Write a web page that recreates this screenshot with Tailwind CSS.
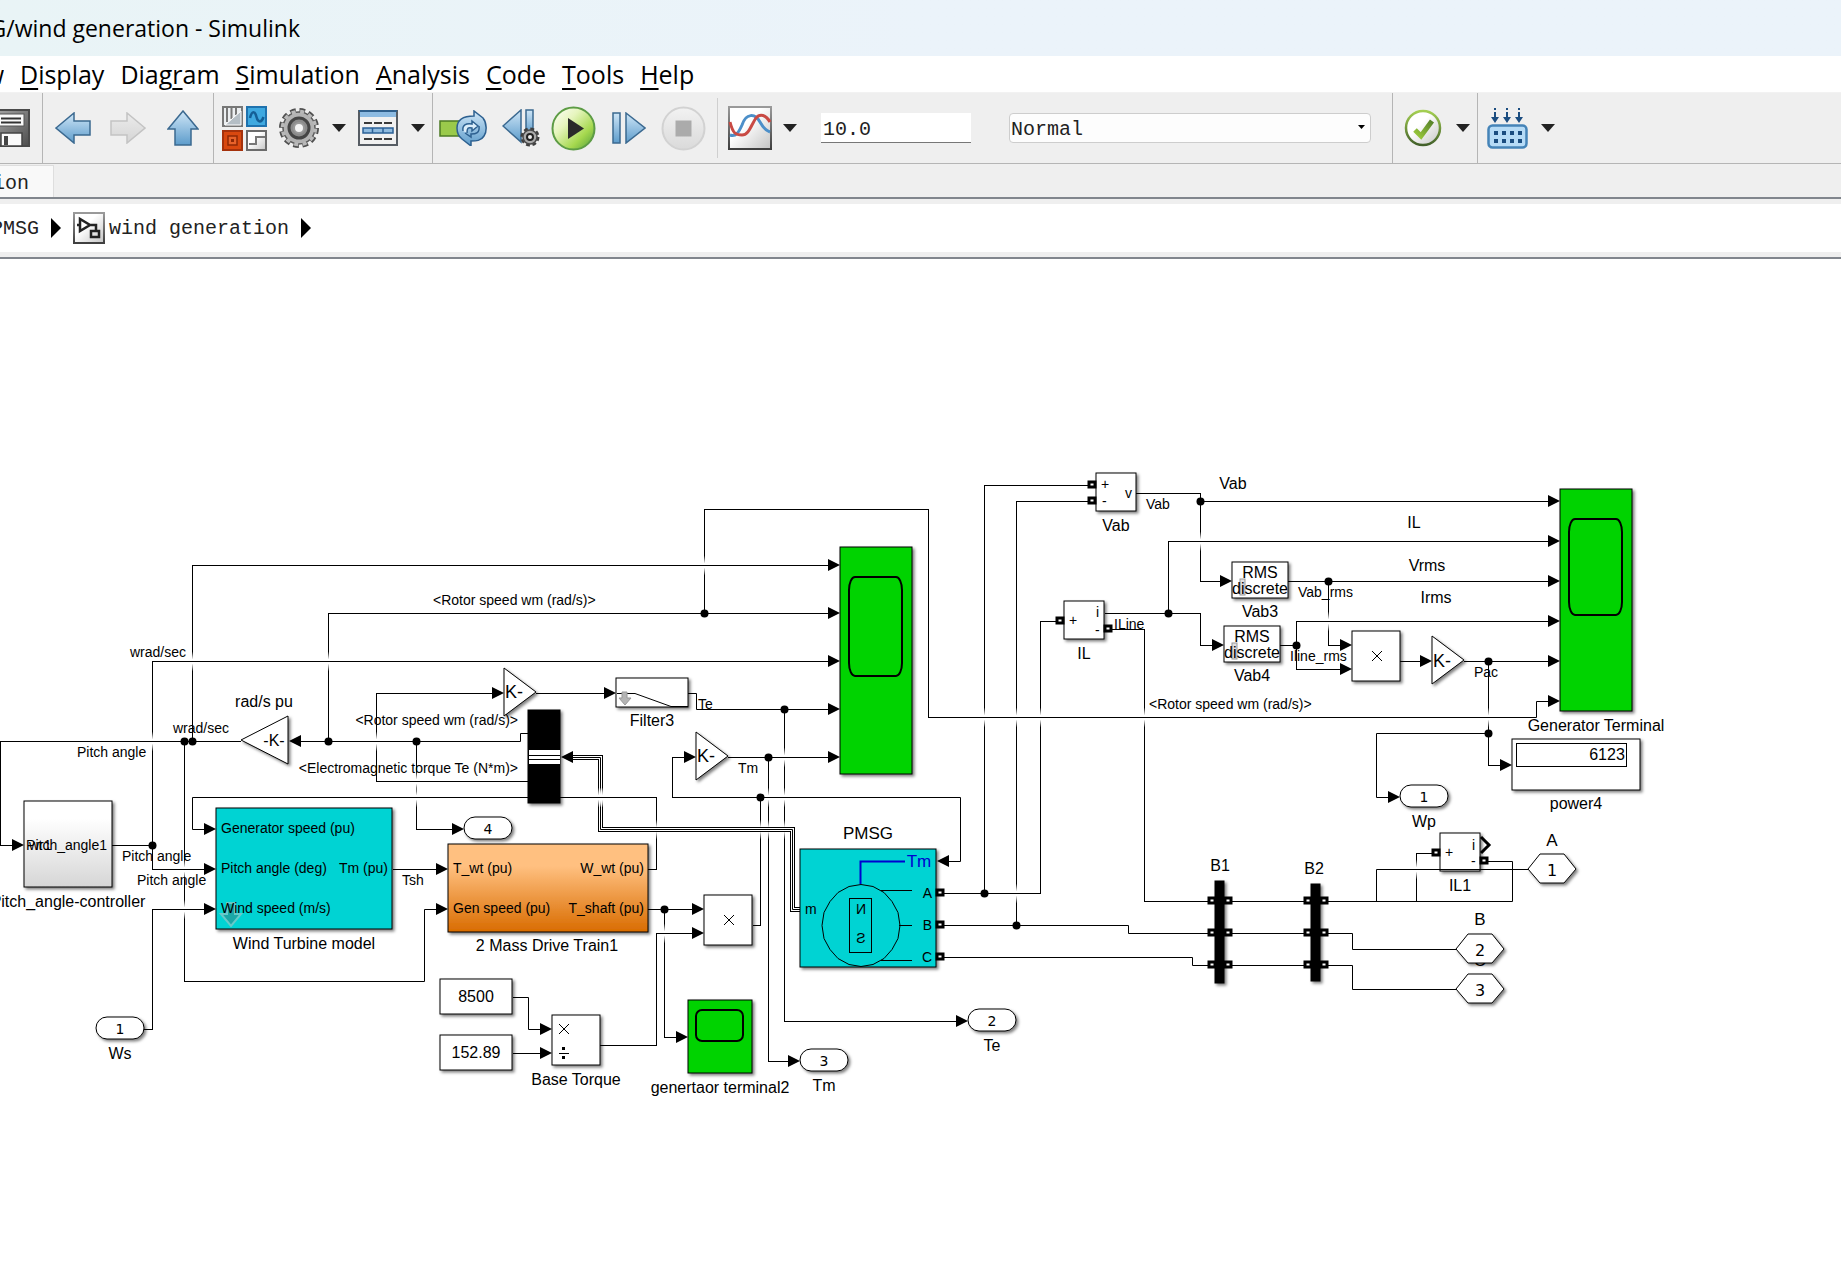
<!DOCTYPE html>
<html lang="en">
<head>
  <meta charset="UTF-8" />
  <meta name="viewport" content="width=device-width,initial-scale=1" />
  <title>PMSG/wind generation - Simulink</title>
  <script src="https://cdn.jsdelivr.net/npm/@tailwindcss/browser@4"></script>
</head>
<body class="bg-white text-black min-h-screen flex flex-col overflow-hidden">

  <!-- shared gradients -->
  <svg class="absolute w-0 h-0" aria-hidden="true">
    <defs>
      <linearGradient id="blue" x1="0" y1="0" x2="0" y2="1"><stop offset="0" stop-color="#cfe6f7"/><stop offset="1" stop-color="#5d9ccb"/></linearGradient>
      <linearGradient id="grey" x1="0" y1="0" x2="0" y2="1"><stop offset="0" stop-color="#ececec"/><stop offset="1" stop-color="#d4d4d4"/></linearGradient>
      <linearGradient id="metal" x1="0" y1="0" x2="1" y2="1"><stop offset="0" stop-color="#a8a8a8"/><stop offset="1" stop-color="#4e4e4e"/></linearGradient>
      <linearGradient id="paper" x1="0" y1="0" x2="1" y2="1"><stop offset="0.4" stop-color="#ffffff"/><stop offset="1" stop-color="#c4c4c4"/></linearGradient>
      <linearGradient id="frame" x1="0" y1="0" x2="0" y2="1"><stop offset="0" stop-color="#9a9a9a"/><stop offset="1" stop-color="#3f3f3f"/></linearGradient>
      <linearGradient id="green" x1="0" y1="0" x2="1" y2="1"><stop offset="0" stop-color="#ffffff"/><stop offset="0.35" stop-color="#e6f5bd"/><stop offset="0.7" stop-color="#a5d84e"/><stop offset="1" stop-color="#4b9a3a"/></linearGradient>
      <linearGradient id="greenring" x1="0" y1="0" x2="0" y2="1"><stop offset="0" stop-color="#a4cf52"/><stop offset="1" stop-color="#42602a"/></linearGradient>
      <linearGradient id="tick" x1="0" y1="1" x2="1" y2="0"><stop offset="0" stop-color="#9ccb3c"/><stop offset="1" stop-color="#56812a"/></linearGradient>
      <linearGradient id="disc" x1="0" y1="0" x2="0" y2="1"><stop offset="0" stop-color="#f2f2f2"/><stop offset="1" stop-color="#dadada"/></linearGradient>
    </defs>
  </svg>

  <header class="h-14 flex items-center bg-linear-to-r from-[#e9f4f6] via-[#ebf3fa] to-[#ebf3fa]">
    <h1 class="w-[300px] -mt-px flex justify-end overflow-hidden whitespace-nowrap font-['Open_Sans',sans-serif] text-[23px] leading-8">G/wind generation - Simulink</h1>
  </header>

  <nav class="h-9 flex items-center gap-4 bg-white font-['Open_Sans',sans-serif] text-[25px] leading-8 underline-offset-4">
    <a href="#" class="w-1 flex justify-end overflow-hidden">w</a>
    <a href="#"><u>D</u>isplay</a>
    <a href="#">Diag<u>r</u>am</a>
    <a href="#"><u>S</u>imulation</a>
    <a href="#"><u>A</u>nalysis</a>
    <a href="#"><u>C</u>ode</a>
    <a href="#"><u>T</u>ools</a>
    <a href="#"><u>H</u>elp</a>
  </nav>

  <div class="h-[72px] flex bg-[#efefef] border-b border-[#b5b5b5] border-t border-t-[#f2f2f2]">
    <div class="w-[43px] shrink-0 flex items-center justify-end pr-3 overflow-hidden border-r border-[#b5b5b5]">
      <button aria-label="Save" class="shrink-0">
        <svg class="w-[38px] h-[38px]" viewBox="0 0 38 38">
          <rect x="1" y="1" width="36" height="36" fill="url(#metal)" stroke="#4a4a4a" stroke-width="2"/>
          <rect x="6" y="5" width="26" height="12" fill="#fafafa" stroke="#555"/>
          <path d="M9 9.500h20M9 13.500h20" stroke="#333" stroke-width="2"/>
          <path d="M9 37V24h21v13z" fill="#fafafa" stroke="#444" stroke-width="1.500"/>
          <rect x="12" y="27" width="4" height="9" fill="#444"/>
        </svg>
      </button>
    </div>

    <div class="w-[171px] shrink-0 flex items-center pl-[2px] border-r border-[#b5b5b5]">
      <button aria-label="Back" class="w-[55px] flex justify-center">
        <svg class="w-9 h-8" viewBox="0 0 36 32"><path d="M1 16L19 1v8h16v14H19v8z" fill="url(#blue)" stroke="#3b6990" stroke-width="1.500"/></svg>
      </button>
      <button aria-label="Forward" class="w-[55px] flex justify-center">
        <svg class="w-9 h-8" viewBox="0 0 36 32"><path d="M35 16L17 1v8H1v14h16v8z" fill="url(#grey)" stroke="#c3c3c3" stroke-width="1.500"/></svg>
      </button>
      <button aria-label="Up to parent" class="w-[55px] flex justify-center">
        <svg class="w-8 h-9" viewBox="0 0 32 36"><path d="M16 1L31 19h-7v16H8V19H1z" fill="url(#blue)" stroke="#3b6990" stroke-width="1.500"/></svg>
      </button>
    </div>

    <div class="w-[219px] shrink-0 flex items-center pl-[6px] border-r border-[#b5b5b5]">
      <button aria-label="Library browser" class="w-12 flex justify-center">
        <svg class="w-[45px] h-[45px]" viewBox="0 0 45 45">
          <rect x="1" y="1" width="19" height="19" fill="#eceff1" stroke="#777" stroke-width="2"/>
          <path d="M5 2v14M9.500 2v11M14 2v7" stroke="#777" stroke-width="2"/><path d="M3 19L19 5v14z" fill="#b5bec5" stroke="#fff"/>
          <rect x="25" y="1" width="19" height="19" fill="#3fa9e0" stroke="#1f72ae" stroke-width="2"/>
          <path d="M28 12c2-8 5-7 6.500-1s5 6 7 0" fill="none" stroke="#145f96" stroke-width="2.500"/>
          <rect x="1" y="25" width="19" height="19" fill="#d9480f" stroke="#a5320c" stroke-width="2"/>
          <rect x="6" y="30" width="9" height="9" fill="#e8622a" stroke="#8e2806" stroke-width="1.500"/><rect x="9" y="33" width="3" height="3" fill="#8e2806"/>
          <rect x="25" y="25" width="19" height="19" fill="url(#paper)" stroke="#6b6b6b" stroke-width="2"/>
          <path d="M27 38h7v-7h9" fill="none" stroke="#777" stroke-width="2"/>
        </svg>
      </button>
      <button aria-label="Model configuration" class="w-[62px] flex justify-center">
        <svg class="w-[42px] h-[42px]" viewBox="-21 -21 42 42">
          <circle r="17.500" fill="none" stroke="#505050" stroke-width="5" stroke-dasharray="5.500 3.660"/>
          <circle r="16" fill="#b3b3b3" stroke="#5a5a5a" stroke-width="1.500"/>
          <circle r="16.500" fill="none" stroke="#b9b9b9" stroke-width="3.500" stroke-dasharray="4 4.640" stroke-dashoffset="-.700"/>
          <circle r="10" fill="#8b8b8b" stroke="#454545" stroke-width="3"/>
          <circle r="5" fill="#f4f4f4" stroke="#9a9a9a" stroke-width="2"/>
        </svg>
      </button>
      <button aria-label="Configuration menu" class="w-[18px] flex justify-center"><svg class="w-[14px] h-2" viewBox="0 0 14 8"><path d="M0 0h14L7 8z" fill="#222"/></svg></button>
      <button aria-label="Model explorer" class="w-[60px] flex justify-center">
        <svg class="w-10 h-9" viewBox="0 0 40 36">
          <rect x="1" y="1" width="38" height="34" fill="#f1f1f1" stroke="#565c63" stroke-width="2"/>
          <rect x="2" y="2" width="36" height="5" fill="#8dbbe2"/><path d="M1 1h38" stroke="#2f5f8c" stroke-width="2"/>
          <path d="M6 13h28M6 29h28" stroke="#3a3a3a" stroke-width="2" stroke-dasharray="8 2"/>
          <rect x="5" y="18" width="30" height="5" fill="#8fbbe0" stroke="#2b6096" stroke-width="1.500"/>
          <path d="M14.500 18v5M25 18v5" stroke="#2b6096" stroke-width="1.500"/>
        </svg>
      </button>
      <button aria-label="Explorer menu" class="w-5 flex justify-center"><svg class="w-[14px] h-2" viewBox="0 0 14 8"><path d="M0 0h14L7 8z" fill="#222"/></svg></button>
    </div>

    <div class="w-[284px] shrink-0 flex items-center pl-[6px]">
      <button aria-label="Update diagram" class="w-12 mr-[10px]">
        <svg class="w-12 h-9" viewBox="0 0 48 36">
          <rect x="1" y="11" width="22" height="15" fill="#9aca4b" stroke="#4c7b24" stroke-width="1.500"/>
          <path d="M18 18c0-9 7-12 17-12V1l9 7c4 5 4 14 1 18-3 5-8 5-13 5v5l-9-7c-4-3-5-7-5-11z" fill="url(#blue)" stroke="#2d6090" stroke-width="1.500"/>
          <path d="M24 21c-1-6 3-8 9-7v-3l6 5-6 5v-3c-4-1-5 0-5 5" fill="#dceefa" stroke="#2d6090" stroke-width="1.500"/>
          <path d="M40 16c1 7-3 8-8 8v3l-6-4" fill="none" stroke="#2d6090" stroke-width="1.500"/>
        </svg>
      </button>
      <button aria-label="Step back" class="w-12 flex justify-center">
        <svg class="w-[38px] h-[38px]" viewBox="0 0 38 38">
          <path d="M1 17L19 1v32z" fill="url(#blue)" stroke="#3b6990" stroke-width="1.500"/>
          <rect x="24" y="1" width="7" height="24" fill="url(#blue)" stroke="#3b6990" stroke-width="1.500"/>
          <circle cx="28" cy="28" r="7.500" fill="#aaa" stroke="#3e3e3e" stroke-width="4" stroke-dasharray="3.500 2.400"/>
          <circle cx="28" cy="28" r="7" fill="#aaa" stroke="#4b4b4b" stroke-width="1.500"/>
          <circle cx="28" cy="28" r="3" fill="#eee" stroke="#222" stroke-width="2"/>
        </svg>
      </button>
      <button aria-label="Run" class="w-14 flex justify-center">
        <svg class="w-[45px] h-[45px]" viewBox="0 0 45 45">
          <circle cx="22.500" cy="22.500" r="21" fill="url(#green)" stroke="#5d9c45" stroke-width="2"/>
          <path d="M17 12l16 10.500L17 33z" fill="#2a2a2a"/>
        </svg>
      </button>
      <button aria-label="Step forward" class="w-14 flex justify-center">
        <svg class="w-[34px] h-8" viewBox="0 0 34 32">
          <rect x="1" y="1" width="7" height="30" fill="url(#blue)" stroke="#3b6990" stroke-width="1.500"/>
          <path d="M14 1l19 15-19 15z" fill="url(#blue)" stroke="#3b6990" stroke-width="1.500"/>
        </svg>
      </button>
      <button aria-label="Stop" class="w-[52px] flex justify-center">
        <svg class="w-[45px] h-[45px]" viewBox="0 0 45 45">
          <circle cx="22.500" cy="22.500" r="21" fill="url(#disc)" stroke="#d2d2d2" stroke-width="2"/>
          <rect x="14.500" y="14.500" width="16" height="16" fill="#ababab"/>
        </svg>
      </button>
    </div>

    <div class="w-[675px] shrink-0 flex items-center">
      <div class="w-px h-[60px] bg-[#cfcfcf]"></div>
      <button aria-label="Simulation data inspector" class="ml-[10px]">
        <svg class="w-11 h-11" viewBox="0 0 44 44">
          <rect x="1" y="1" width="42" height="42" fill="url(#paper)" stroke="url(#frame)" stroke-width="2"/>
          <path d="M2 29c6 2 9-3 12-10 4-12 13-12 18-3 4 7 7 9 10 10" fill="none" stroke="#4c8fc9" stroke-width="3"/>
          <path d="M2 16c3 12 6 13 12 13 7 0 9-10 14-17 4-5 10-3 14 4" fill="none" stroke="#c94a44" stroke-width="3"/>
        </svg>
      </button>
      <button aria-label="Inspector menu" class="ml-[11px] w-[14px]"><svg class="w-[14px] h-2" viewBox="0 0 14 8"><path d="M0 0h14L7 8z" fill="#222"/></svg></button>
      <input aria-label="Simulation stop time" value="10.0" class="ml-6 w-[150px] h-[30px] bg-white border-b border-[#777] pt-1 px-[2px] font-['Liberation_Mono',monospace] text-[20px] leading-6 text-[#222]" />
      <div class="ml-[38px] relative">
        <select aria-label="Simulation mode" class="appearance-none w-[362px] h-[30px] bg-[#fdfdfd] border border-[#cdcdcd] rounded pt-[3px] px-px font-['Liberation_Mono',monospace] text-[20px] leading-6 text-[#222]">
          <option>Normal</option>
        </select>
        <svg class="absolute right-[6px] top-3 w-[7px] h-1 pointer-events-none" viewBox="0 0 7 4"><path d="M0 0h7L3.500 4z"/></svg>
      </div>
    </div>

    <div class="w-[85px] shrink-0 flex items-center border-l border-[#b5b5b5] pl-[11px]">
      <button aria-label="Model advisor">
        <svg class="w-[38px] h-[38px]" viewBox="0 0 38 38">
          <circle cx="19" cy="19" r="17" fill="url(#paper)" stroke="url(#greenring)" stroke-width="2.500"/>
          <path d="M11 21l6 6L28 12" fill="none" stroke="url(#tick)" stroke-width="5"/>
        </svg>
      </button>
      <button aria-label="Advisor menu" class="ml-[14px]"><svg class="w-[14px] h-2" viewBox="0 0 14 8"><path d="M0 0h14L7 8z" fill="#222"/></svg></button>
    </div>
    <div class="flex-1 flex items-center border-l border-[#b5b5b5] pl-[9px]">
      <button aria-label="Build model">
        <svg class="w-[41px] h-[41px]" viewBox="0 0 41 41">
          <rect x="1.500" y="17.500" width="38" height="22" rx="4" fill="#b6dbf6" stroke="#4584b8" stroke-width="2.500"/>
          <path d="M7 25h28M7 33h28" stroke="#1b4d80" stroke-width="4" stroke-dasharray="4 4"/>
          <path d="M8 0v2M8 4v6M20 0v2M20 4v6M32 0v2M32 4v6" stroke="#1b4d80" stroke-width="2"/>
          <path d="M4 9h8l-4 6zM16 9h8l-4 6zM28 9h8l-4 6z" fill="#1b4d80"/>
        </svg>
      </button>
      <button aria-label="Build menu" class="ml-[13px]"><svg class="w-[14px] h-2" viewBox="0 0 14 8"><path d="M0 0h14L7 8z" fill="#222"/></svg></button>
    </div>
  </div>

  <div class="h-[35px] flex items-end bg-[#efefef] border-b-2 border-[#81868d]">
    <button class="w-[54px] h-8 pt-1 pr-6 flex items-center justify-end overflow-hidden bg-[#f9f9f9] border-t border-r border-[#dedede] font-['Liberation_Mono',monospace] text-[20px] leading-6 text-[#222]"><span>ion</span></button>
  </div>

  <div class="h-[58px] flex items-center bg-white border-y-[5px] border-[#efefef] font-['Liberation_Mono',monospace] text-[20px] leading-6 text-[#222]">
    <a href="#" class="w-[39px] pt-[2px] flex justify-end overflow-hidden">PMSG</a>
    <svg class="ml-3 w-[10px] h-5" viewBox="0 0 10 20"><path d="M0 0l10 10L0 20z"/></svg>
    <svg class="ml-3 w-8 h-8" viewBox="0 0 32 32">
      <rect x="1" y="1" width="30" height="30" fill="url(#paper)" stroke="url(#frame)" stroke-width="2"/>
      <path d="M7 7v12l10-6zM4 13h3M17 13h6v6" fill="none" stroke="#222" stroke-width="2.500"/>
      <rect x="18" y="19" width="8" height="6" fill="none" stroke="#222" stroke-width="2.500"/>
    </svg>
    <a href="#" class="ml-1 pt-[2px]">wind generation</a>
    <svg class="ml-3 w-[10px] h-5" viewBox="0 0 10 20"><path d="M0 0l10 10L0 20z"/></svg>
  </div>

  <main class="flex-1 border-t-2 border-[#81868d] overflow-hidden">
    <!-- model canvas -->
    <svg class="block w-[1841px] h-[1026px] font-['Liberation_Sans',sans-serif]" viewBox="0 259 1841 1026">
      <defs>
        <filter id="shadow" x="-20%" y="-20%" width="150%" height="150%"><feDropShadow dx="2" dy="2" stdDeviation="1.500" flood-color="#000" flood-opacity="0.5"/></filter>
        <linearGradient id="fade" x1="0" y1="0" x2="0" y2="1"><stop offset="0" stop-color="#fff" stop-opacity="0"/><stop offset="0.4" stop-color="#fff"/><stop offset="0.6" stop-color="#fff"/><stop offset="1" stop-color="#fff" stop-opacity="0"/></linearGradient>
        <linearGradient id="orange" x1="0" y1="0" x2="0" y2="1"><stop offset="0.250" stop-color="#ffc080"/><stop offset="1" stop-color="#d96c00"/></linearGradient>
        <linearGradient id="silver" x1="0" y1="0" x2="0" y2="1"><stop offset="0.2" stop-color="#fff"/><stop offset="1" stop-color="#d6d6d6"/></linearGradient>
        <rect id="gap" x="-4" y="-10" width="8" height="20" fill="url(#fade)"/>
        <path id="right" d="M0 0l-12-6v12z"/>
        <path id="left" d="M0 0l12-6v12z"/>
        <circle id="dot" r="4"/>
        <rect id="port" x="1" y="1" width="6" height="5" fill="#fff" stroke="#000" stroke-width="3"/>
        <path id="times" d="M-5-5L5 5M5-5L-5 5" fill="none" stroke="#000"/>
        <path id="down" d="M-4-12h8v11h6L0 11-10-1h6z"/>
      </defs>

      <!-- vertical runs -->
      <g fill="none" stroke="#000">
        <path d="M704.500 613V509M928.500 509v209M192.500 741V565M328.500 741V613M152.500 869V661M184.500 741v241M0.500 741v105M152.500 1030V909"/>
        <path d="M376.500 782V693M416.500 741v89M656.500 797v73M656.500 1046V933M664.500 909v129M760.500 797v129M768.500 757v305M784.500 709v313M672.500 757v41"/>
        <path d="M984.500 894V485M1016.500 926V501M1040.500 894V621M1144.500 629v273M1200.500 493v89M1168.500 614V541M1200.500 613v33M1328.500 581v65M1296.500 621v49M1488.500 661v105M1416.500 902v-49"/>
      </g>
      <g>
        <use href="#gap" x="704.500" y="565.500"/><use href="#gap" x="328.500" y="661.500"/><use href="#gap" x="192.500" y="661.500"/>
        <use href="#gap" x="152.500" y="741.500"/><use href="#gap" x="184.500" y="869.500"/><use href="#gap" x="184.500" y="909.500"/>
        <use href="#gap" x="376.500" y="741.500"/><use href="#gap" x="416.500" y="781.500"/><use href="#gap" x="416.500" y="797.500"/>
        <use href="#gap" x="656.500" y="829.500"/><use href="#gap" x="664.500" y="933.500"/><use href="#gap" x="760.500" y="829.500"/>
        <use href="#gap" x="768.500" y="797.500"/><use href="#gap" x="768.500" y="829.500"/><use href="#gap" x="784.500" y="757.500"/><use href="#gap" x="784.500" y="797.500"/><use href="#gap" x="784.500" y="829.500"/>
        <use href="#gap" x="984.500" y="717.500"/><use href="#gap" x="1016.500" y="717.500"/><use href="#gap" x="1016.500" y="893.500"/><use href="#gap" x="1040.500" y="717.500"/><use href="#gap" x="1144.500" y="717.500"/>
        <use href="#gap" x="1200.500" y="541.500"/><use href="#gap" x="1328.500" y="621.500"/><use href="#gap" x="1488.500" y="717.500"/><use href="#gap" x="1416.500" y="869.500"/>
      </g>

      <!-- bus from PMSG to selector -->
      <g fill="none">
        <path d="M570 757.500h30.500v72h192v80h9" stroke="#000" stroke-width="5"/>
        <path d="M570 757.500h30.500v72h192v80h9" stroke="#fff" stroke-width="3"/>
        <path d="M570 757.500h30.500v72h192v80h9" stroke="#000"/>
        <use href="#gap" x="598.500" y="797.500"/><use href="#gap" x="603.500" y="797.500"/>
      </g>

      <!-- horizontal runs -->
      <g fill="none" stroke="#000">
        <path d="M704 509.500h225M928 717.500h608.500v-16H1550M192 565.500h640M328 613.500h504M152 661.500h680M688 693.500h8.500v16H832M728 757.500h104M672 757.500h14M672 797.500h288.500v64H948"/>
        <path d="M0 741.500h241M300 741.500h220.500v-8h8M0 845.500h14M112 845.500h41M152 869.500h54M144 1029.500h9M152 909.500h54M184 981.500h240.500v-72H440M393 869.500h45M376 693.500h120M536 693.500h72M376 781.500h152M204 829.500h-11.500v-32H657M416 829.500h40"/>
        <path d="M648 869.500h9M648 909.500h48M600 1045.500h57M656 933.500h40M664 1037.500h16M753 925.500h8M768 1061.500h24M784 1021.500h176M513 997.500h15.500v32H544M513 1053.500h31"/>
        <path d="M984 485.500h105M1016 501.500h73M1040 621.500h17M1136 493.500h65M1200 501.500h352M1200 581.500h24M1168 541.500h384M1105 613.500h96M1200 645.500h16M1112 629.500h33"/>
        <path d="M1288 581.500h264M1328 645.500h16M1280 645.500h17M1296 621.500h256M1296 669.500h48M1400 661.500h24M1464 661.500h88M1488 765.500h16M1489 733.500h-112.500v64H1392"/>
        <path d="M944 893.500h97M944 925.500h184.500v8H1208M944 957.500h248.500v8H1208M1144 901.500h64M1232 901.500h72M1232 933.500h72M1232 965.500h72M1328 901.500h184.500v-40H1488M1416 853.500h16M1328 933.500h24.500v16H1457M1328 965.500h24.500v24H1457"/>
      </g>

      <g>
        <use href="#dot" x="704.500" y="613.500"/><use href="#dot" x="784.500" y="709.500"/><use href="#dot" x="768.500" y="757.500"/><use href="#dot" x="760.500" y="797.500"/>
        <use href="#dot" x="184.500" y="741.500"/><use href="#dot" x="192.500" y="741.500"/><use href="#dot" x="328.500" y="741.500"/><use href="#dot" x="416.500" y="741.500"/><use href="#dot" x="152.500" y="845.500"/><use href="#dot" x="664.500" y="909.500"/>
        <use href="#dot" x="984.500" y="893.500"/><use href="#dot" x="1016.500" y="925.500"/><use href="#dot" x="1200.500" y="501.500"/><use href="#dot" x="1168.500" y="613.500"/><use href="#dot" x="1328.500" y="581.500"/><use href="#dot" x="1296.500" y="645.500"/><use href="#dot" x="1488.500" y="661.500"/><use href="#dot" x="1488.500" y="733.500"/>
      </g>

      <!-- blocks -->
      <g filter="url(#shadow)" fill="#fff" stroke="#000">
        <rect x="840" y="547" width="72" height="227" fill="#00d300"/>
        <rect x="1560" y="489" width="72" height="222" fill="#00d300"/>
        <rect x="688" y="1000" width="64" height="73" fill="#00d300"/>
        <rect x="216" y="808" width="176" height="121" fill="#00d3d3"/>
        <rect x="800" y="849" width="136" height="118" fill="#00d3d3"/>
        <rect x="448" y="844" width="200" height="88" fill="url(#orange)"/>
        <rect x="24" y="801" width="88" height="86" fill="url(#silver)"/>
        <rect x="616" y="678" width="72" height="29"/>
        <rect x="704" y="895" width="48" height="50"/>
        <rect x="552" y="1015" width="48" height="50"/>
        <rect x="440" y="979" width="72" height="35"/>
        <rect x="440" y="1035" width="72" height="35"/>
        <rect x="1096" y="473" width="40" height="38"/>
        <rect x="1064" y="601" width="40" height="38"/>
        <rect x="1440" y="833" width="40" height="38"/>
        <rect x="1232" y="562" width="56" height="36"/>
        <rect x="1224" y="626" width="56" height="36"/>
        <rect x="1352" y="631" width="48" height="50"/>
        <rect x="1512" y="739" width="128" height="51"/>
        <rect x="528" y="710" width="32" height="93" fill="#000"/>
        <rect x="1215" y="881" width="9" height="102" fill="#000"/>
        <rect x="1311" y="884" width="9" height="97" fill="#000"/>
        <path d="M504 668v48l32-24zM696 732v48l32-24zM1432 636v48l32-24zM288 716v48l-47-24z"/>
        <rect x="464" y="817" width="48" height="22" rx="11"/>
        <rect x="96" y="1017" width="48" height="22" rx="11"/>
        <rect x="800" y="1049" width="48" height="22" rx="11"/>
        <rect x="968" y="1009" width="48" height="22" rx="11"/>
        <rect x="1400" y="785" width="48" height="22" rx="11"/>
      </g>
      <text x="1480" y="966" text-anchor="middle" class="text-[17px]">C</text>
      <path filter="url(#shadow)" fill="#fff" stroke="#000" d="M1528 869l12-15h24l12 15-12 14h-24zM1456 949l12-15h24l12 15-12 14h-24zM1456 989l12-15h24l12 15-12 14h-24z"/>
      <path d="M1376.500 902v-32.500H1528" fill="none" stroke="#000"/>

      <!-- block faces -->
      <g fill="none" stroke="#000">
        <rect x="849" y="577" width="53" height="99" rx="6" ry="13" stroke-width="2"/>
        <rect x="1569" y="519" width="53" height="96" rx="6" ry="13" stroke-width="2"/>
        <rect x="696" y="1010" width="47" height="31" rx="6" stroke-width="2"/>
        <rect x="529" y="750" width="31" height="14" fill="#fff" stroke="none"/>
        <path d="M529 755.500h31M529 759.500h31"/>
        <path d="M617 693.500h18l36 13h17"/>
        <rect x="1516.500" y="743.500" width="110" height="23"/>
        <path d="M861 966.500l-12-2-11-6-8-9-6-11-2-13 2-13 6-11 8-9 11-6 12-2 12 2 11 6 8 9 6 11 2 13-2 13-6 11-8 9-11 6z"/>
        <rect x="849.500" y="898.500" width="22" height="54"/>
        <path d="M881 890.500h31M899 925.500h13M881 960.500h31"/>
        <path d="M905 861.500h-44.500V884" stroke="#0000d0" stroke-width="2"/>
        <path d="M1481 837l8 8-8 8" stroke-width="3"/>
        <use href="#times" x="729" y="920"/><use href="#times" x="1377" y="656"/><use href="#times" x="564" y="1029"/>
        <path d="M559 1053.500h10"/><path d="M562 1048.500h3M562 1057.500h3" stroke-width="3"/>
      </g>
      <g>
        <use href="#right" x="840" y="565"/><use href="#right" x="840" y="613"/><use href="#right" x="840" y="661"/><use href="#right" x="840" y="709"/><use href="#right" x="840" y="757"/>
        <use href="#right" x="616" y="693"/><use href="#right" x="696" y="757"/><use href="#right" x="504" y="693"/><use href="#right" x="216" y="829"/><use href="#right" x="216" y="869"/><use href="#right" x="216" y="909"/><use href="#right" x="24" y="845"/>
        <use href="#right" x="448" y="869"/><use href="#right" x="448" y="909"/><use href="#right" x="464" y="829"/><use href="#right" x="704" y="909"/><use href="#right" x="704" y="933"/><use href="#right" x="688" y="1037"/><use href="#right" x="800" y="1061"/><use href="#right" x="968" y="1021"/><use href="#right" x="552" y="1029"/><use href="#right" x="552" y="1053"/>
        <use href="#right" x="1560" y="501"/><use href="#right" x="1560" y="541"/><use href="#right" x="1560" y="581"/><use href="#right" x="1560" y="621"/><use href="#right" x="1560" y="661"/><use href="#right" x="1560" y="701"/>
        <use href="#right" x="1232" y="581"/><use href="#right" x="1224" y="645"/><use href="#right" x="1352" y="645"/><use href="#right" x="1352" y="669"/><use href="#right" x="1432" y="661"/><use href="#right" x="1512" y="765"/><use href="#right" x="1400" y="797"/>
        <use href="#left" x="289" y="741"/><use href="#left" x="561" y="757"/><use href="#left" x="937" y="861"/>
      </g>
      <g>
        <use href="#port" x="1088" y="481"/><use href="#port" x="1088" y="497"/><use href="#port" x="1056" y="617"/><use href="#port" x="1104" y="625"/><use href="#port" x="1432" y="849"/><use href="#port" x="1480" y="857"/>
        <use href="#port" x="936" y="889"/><use href="#port" x="936" y="921"/><use href="#port" x="936" y="953"/>
        <use href="#port" x="1208" y="897"/><use href="#port" x="1208" y="929"/><use href="#port" x="1208" y="961"/><use href="#port" x="1224" y="897"/><use href="#port" x="1224" y="929"/><use href="#port" x="1224" y="961"/>
        <use href="#port" x="1304" y="897"/><use href="#port" x="1304" y="929"/><use href="#port" x="1304" y="961"/><use href="#port" x="1320" y="897"/><use href="#port" x="1320" y="929"/><use href="#port" x="1320" y="961"/>
      </g>

      <!-- mask badges -->
      <use href="#down" x="231" y="915" fill="#229c9c" fill-opacity="0.8" stroke="#66c9c9" stroke-width="2"/>
      <path d="M622 692h5v6h4l-6 7-6-7h3z" fill="#b5b5b5" stroke="#999"/>
      <rect x="1240" y="579" width="5" height="16" fill="#ccc" fill-opacity="0.6" stroke="#999"/>
      <rect x="1232" y="643" width="5" height="16" fill="#ccc" fill-opacity="0.6" stroke="#999"/>

      <!-- signal and port labels -->
      <g class="text-[14px]">
        <text x="433" y="605">&lt;Rotor speed wm (rad/s)&gt;</text>
        <text x="518" y="725" text-anchor="end">&lt;Rotor speed wm (rad/s)&gt;</text>
        <text x="518" y="773" text-anchor="end">&lt;Electromagnetic torque Te (N*m)&gt;</text>
        <text x="1149" y="709">&lt;Rotor speed wm (rad/s)&gt;</text>
        <text x="130" y="657">wrad/sec</text>
        <text x="173" y="733">wrad/sec</text>
        <text x="77" y="757">Pitch angle</text>
        <text x="122" y="861">Pitch angle</text>
        <text x="137" y="885">Pitch angle</text>
        <text x="402" y="885">Tsh</text>
        <text x="698" y="709">Te</text>
        <text x="738" y="773">Tm</text>
        <text x="1146" y="509">Vab</text>
        <text x="1114" y="629">ILine</text>
        <text x="1298" y="597">Vab_rms</text>
        <text x="1290" y="661">Iline_rms</text>
        <text x="1474" y="677">Pac</text>
        <text x="29" y="850">wr1</text>
        <text x="107" y="850" text-anchor="end">Pitch_angle1</text>
        <text x="221" y="833">Generator speed (pu)</text>
        <text x="221" y="873">Pitch angle (deg)</text>
        <text x="221" y="913">Wind speed (m/s)</text>
        <text x="388" y="873" text-anchor="end">Tm (pu)</text>
        <text x="453" y="873">T_wt (pu)</text>
        <text x="453" y="913">Gen speed (pu)</text>
        <text x="644" y="873" text-anchor="end">W_wt (pu)</text>
        <text x="644" y="913" text-anchor="end">T_shaft (pu)</text>
        <text x="805" y="914">m</text>
        <text x="932" y="898" text-anchor="end">A</text>
        <text x="932" y="930" text-anchor="end">B</text>
        <text x="932" y="962" text-anchor="end">C</text>
        <text x="861" y="914" text-anchor="middle">И</text>
        <text x="861" y="943" text-anchor="middle">Ƨ</text>
        <text x="1101" y="489">+</text><text x="1102" y="506">-</text><text x="1125" y="498">v</text>
        <text x="1069" y="625">+</text><text x="1096" y="617">i</text><text x="1095" y="635">-</text>
        <text x="1445" y="857">+</text><text x="1472" y="850">i</text><text x="1471" y="866">-</text>
      </g>

      <!-- block names and values -->
      <g class="text-[16px]" text-anchor="middle">
        <text x="264" y="707">rad/s pu</text>
        <text x="274" y="746">-K-</text>
        <text x="68" y="907">Pitch_angle-controller</text>
        <text x="304" y="949">Wind Turbine model</text>
        <text x="547" y="951">2 Mass Drive Train1</text>
        <text x="476" y="1002">8500</text>
        <text x="476" y="1058">152.89</text>
        <text x="576" y="1085">Base Torque</text>
        <text x="720" y="1093">genertaor terminal2</text>
        <text x="652" y="726">Filter3</text>
        <text x="120" y="1059">Ws</text>
        <text x="824" y="1091">Tm</text>
        <text x="992" y="1051">Te</text>
        <text x="1116" y="531">Vab</text>
        <text x="1233" y="489">Vab</text>
        <text x="1414" y="528">IL</text>
        <text x="1427" y="571">Vrms</text>
        <text x="1436" y="603">Irms</text>
        <text x="1084" y="659">IL</text>
        <text x="1260" y="578">RMS</text>
        <text x="1260" y="594">discrete</text>
        <text x="1260" y="617">Vab3</text>
        <text x="1252" y="642">RMS</text>
        <text x="1252" y="658">discrete</text>
        <text x="1252" y="681">Vab4</text>
        <text x="1596" y="731">Generator Terminal</text>
        <text x="1607" y="760">6123</text>
        <text x="1576" y="809">power4</text>
        <text x="1424" y="827">Wp</text>
        <text x="1460" y="891">IL1</text>
        <text x="1220" y="871">B1</text>
        <text x="1314" y="874">B2</text>
      </g>
      <g class="text-[17px]" text-anchor="middle">
        <text x="868" y="839">PMSG</text>
        <text x="1552" y="846">A</text>
        <text x="1480" y="925">B</text>
        <text x="919" y="867" fill="#0000d0">Tm</text>
      </g>
      <g class="text-[18px]">
        <text x="505" y="698">K-</text>
        <text x="697" y="762">K-</text>
        <text x="1433" y="667">K-</text>
      </g>
      <g class="text-[14px] font-['DejaVu_Sans',sans-serif]" text-anchor="middle">
        <text x="488" y="834">4</text>
        <text x="120" y="1034">1</text>
        <text x="824" y="1066">3</text>
        <text x="992" y="1026">2</text>
        <text x="1424" y="802">1</text>
      </g>
      <g class="text-[16px] font-['DejaVu_Sans',sans-serif]" text-anchor="middle">
        <text x="1552" y="876">1</text>
        <text x="1480" y="956">2</text>
        <text x="1480" y="996">3</text>
      </g>
    </svg>
  </main>
</body>
</html>
